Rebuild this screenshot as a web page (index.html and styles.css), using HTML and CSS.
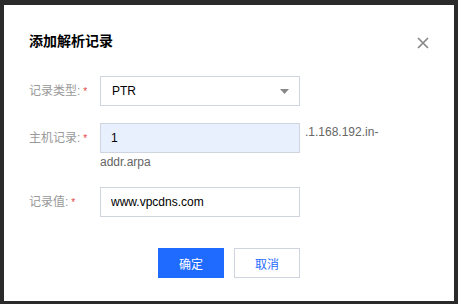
FILE: index.html
```html
<!DOCTYPE html>
<html lang="zh-CN">
<head>
    <meta charset="UTF-8">
    <meta name="viewport" content="width=device-width, initial-scale=1.0">
    <title>添加解析记录</title>
    <link rel="stylesheet" href="styles.css">
</head>
<body>

<div class="dialog">
    <div class="dialog-head">
        <div class="dialog-title">添加解析记录</div>
        <button class="close" title="关闭">
            <svg width="12" height="12" viewBox="0 0 12 12">
                <path d="M1 1L11 11M11 1L1 11" stroke="#888" stroke-width="1.7" fill="none"/>
            </svg>
        </button>
    </div>

    <!-- 表单 -->
    <div class="form">
        <div class="row">
            <label class="label">记录类型:<span class="req">*</span></label>
            <div class="control">
                <div class="select">
                    <span>PTR</span>
                    <svg width="9" height="5" viewBox="0 0 9 5"><path d="M0 0H9L4.5 5Z" fill="#888"/></svg>
                </div>
            </div>
        </div>

        <div class="row">
            <label class="label" for="host">主机记录:<span class="req">*</span></label>
            <div class="control wide">
                <input type="text" id="host" class="input filled" value="1"><span class="suffix">.1.168.192.in-addr.arpa</span>
            </div>
        </div>

        <div class="row">
            <label class="label" for="value">记录值:<span class="req">*</span></label>
            <div class="control">
                <input type="text" id="value" class="input" value="www.vpcdns.com">
            </div>
        </div>
    </div>

    <div class="dialog-foot">
        <button class="btn primary">确定</button>
        <button class="btn">取消</button>
    </div>
</div>

</body>
</html>
```

FILE: styles.css
```css
body {
    margin: 0;
    padding: 5px 4px 3px;
    background-color: #2a2a2a;
    font-family: "Liberation Sans", "Noto Sans CJK SC", sans-serif;
    font-size: 12px;
}
.dialog {
    background-color: white;
    width: 450px;
    height: 296px;
    box-sizing: border-box;
    padding: 26px 25px 25px;
}
.dialog-head {
    display: flex;
    justify-content: space-between;
    align-items: center;
    height: 20px;
}
.dialog-title {
    font-size: 14px;
    font-weight: bold;
    line-height: 20px;
    color: #000;
}
.close {
    border: none;
    background: none;
    padding: 0;
    width: 12px;
    height: 12px;
    display: flex;
    cursor: pointer;
    margin-top: 4px;
}
.form {
    margin-top: 25px;
}
.row {
    display: flex;
    margin-bottom: 16px;
}
.row:last-child {
    margin-bottom: 0;
}
.label {
    width: 71px;
    flex-shrink: 0;
    line-height: 30px;
    color: #999;
}
.req {
    color: #e54545;
    margin-left: 3px;
    font-size: 10px;
}
.control {
    width: 200px;
    line-height: 18px;
}
.control.wide {
    width: 300px;
}
.select {
    width: 200px;
    height: 30px;
    box-sizing: border-box;
    border: 1px solid #cfd5de;
    padding: 0 10px 0 11px;
    display: flex;
    align-items: center;
    justify-content: space-between;
    color: #000;
}
.input {
    width: 200px;
    height: 30px;
    box-sizing: border-box;
    border: 1px solid #cfd5de;
    padding: 0 10px;
    margin: 0;
    font-family: inherit;
    font-size: 12px;
    color: #000;
    outline: none;
    vertical-align: top;
}
.input.filled {
    background-color: #e8f0fe;
}
.suffix {
    margin-left: 5px;
    color: #666;
}
.dialog-foot {
    display: flex;
    justify-content: center;
    gap: 10px;
    margin-top: 30px;
}
.btn {
    width: 66px;
    height: 30px;
    box-sizing: border-box;
    border: 1px solid #cfd5de;
    background-color: white;
    color: #1f6bff;
    font-family: inherit;
    font-size: 12px;
    cursor: pointer;
}
.btn.primary {
    background-color: #1f6bff;
    border-color: #1f6bff;
    color: white;
}
```
